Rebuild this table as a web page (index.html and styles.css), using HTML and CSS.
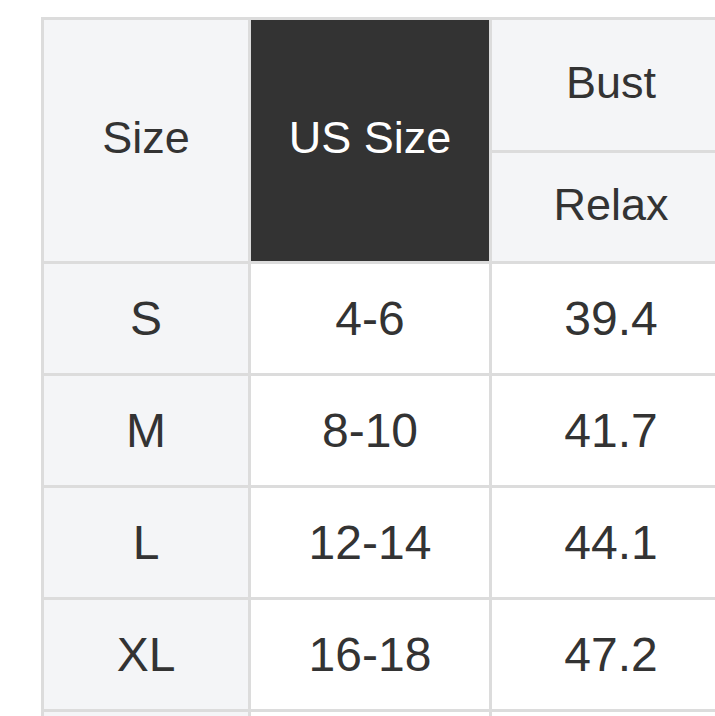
FILE: index.html
```html
<!DOCTYPE html>
<html lang="en">
<head>
<meta charset="utf-8">
<title>Size chart</title>
<link rel="stylesheet" href="styles.css">
</head>
<body>
<div class="chart">
  <div class="cell head span2">Size</div>
  <div class="cell head dark span2">US Size</div>
  <div class="cell head">Bust</div>
  <div class="cell head">Relax</div>

  <div class="cell side">S</div>
  <div class="cell">4-6</div>
  <div class="cell">39.4</div>

  <div class="cell side">M</div>
  <div class="cell">8-10</div>
  <div class="cell">41.7</div>

  <div class="cell side">L</div>
  <div class="cell">12-14</div>
  <div class="cell">44.1</div>

  <div class="cell side">XL</div>
  <div class="cell">16-18</div>
  <div class="cell">47.2</div>

  <div class="cell side"></div>
  <div class="cell"></div>
  <div class="cell"></div>
</div>
</body>
</html>
```
FILE: styles.css
```css
html, body {
  margin: 0;
  padding: 0;
  background: #ffffff;
  overflow: hidden;
}

body {
  font-family: "Liberation Sans", Arial, Helvetica, sans-serif;
  color: #333333;
  height: 716px;
}

.chart {
  display: grid;
  grid-template-columns: 204px 238px 238px;
  grid-template-rows: 130px 108px 109px 109px 109px 109px 4px;
  gap: 3px;
  padding: 3px 3px 0 3px;
  background: #dcdcdc;
  width: max-content;
  margin: 17px 0 0 41px;
}

.cell {
  display: flex;
  align-items: center;
  justify-content: center;
  background: #ffffff;
  font-size: 48px;
  line-height: 1;
}

.head {
  background: #f4f5f7;
  font-size: 45px;
  padding-bottom: 6px;
}

.span2 {
  grid-row: span 2;
}

.dark {
  background: #333333;
  color: #ffffff;
}

.side {
  background: #f4f5f7;
}
```
